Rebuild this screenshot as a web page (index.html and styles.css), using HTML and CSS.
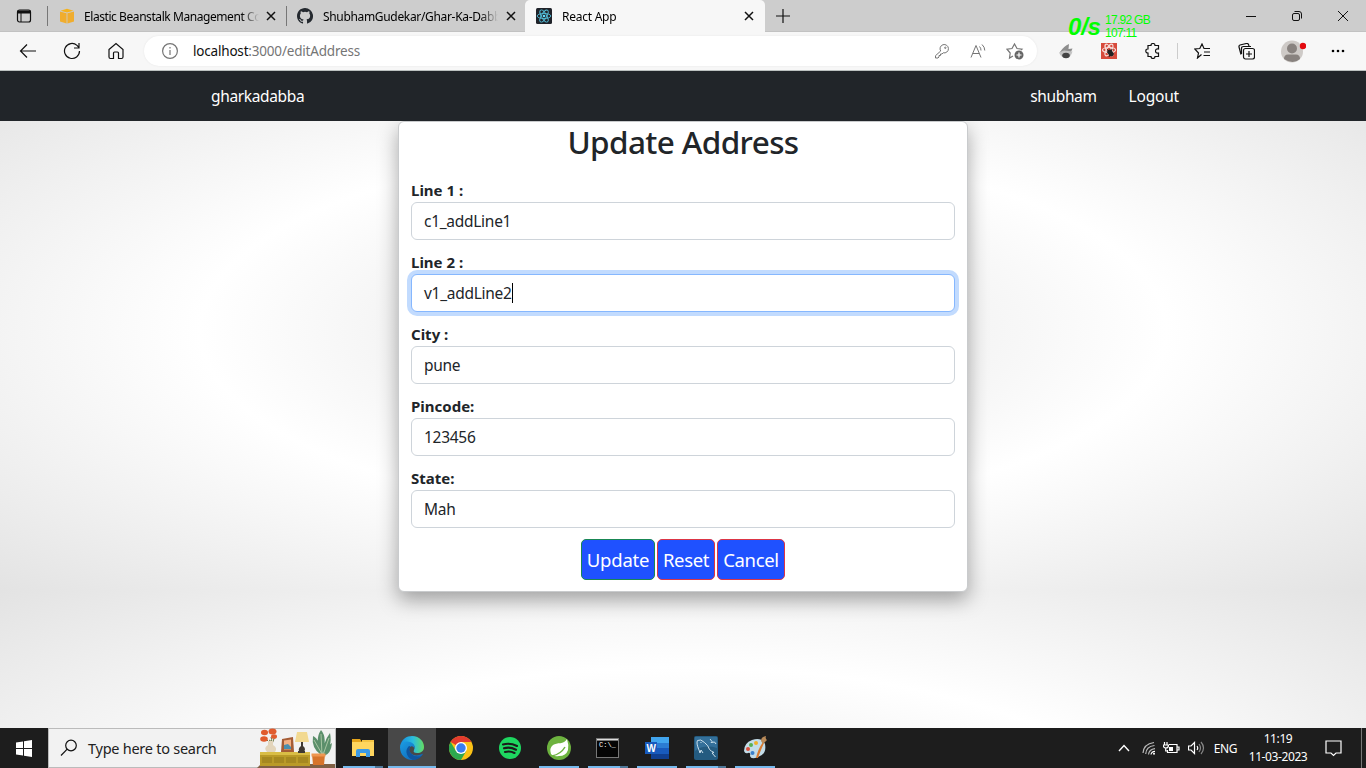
FILE: index.html
```html
<!DOCTYPE html>
<html lang="en">
<head>
<meta charset="utf-8">
<title>React App</title>
<link rel="stylesheet" href="styles.css">
</head>
<body>
<div class="screen">
  <header class="tabs">
    <div class="tab-menu"><svg class="i" width="16" height="16" viewBox="0 0 16 16"><rect x="1.5" y="2" width="13" height="12" rx="2"/><path d="M2 3.5h12M5 5v9" stroke-width="1"/><path d="M2 3h12v2H2z" fill="#111"/></svg></div>
    <div class="tab tab-first">
      <svg width="16" height="16" viewBox="0 0 16 16"><path fill="#f0ad2e" d="M1 3.500l6.600 1.800V15.500L1 13.500zM15 3.500L8.400 5.300v10.200l6.600-2z"/><path fill="#f5b21c" d="M1.500 2.700L8 .7l6.500 2L8 4.600z"/></svg>
      <span class="tab-title">Elastic Beanstalk Management Co</span>
      <svg class="i close" width="10" height="10" viewBox="0 0 10 10"><path d="M1 1l8 8M9 1L1 9"/></svg>
    </div>
    <div class="tab tab-second">
      <svg width="16" height="16" viewBox="0 0 16 16"><path fill="#24292f" d="M8 0C3.580 0 0 3.580 0 8c0 3.540 2.290 6.530 5.470 7.590.4.070.55-.17.55-.38v-1.490c-2.010.37-2.530-.49-2.690-.94-.09-.23-.48-.94-.82-1.130-.28-.15-.68-.52-.01-.53.63-.01 1.080.58 1.230.82.72 1.210 1.870.87 2.330.66.070-.52.28-.87.51-1.070-1.780-.2-3.640-.89-3.640-3.950 0-.87.31-1.590.82-2.150-.08-.2-.36-1.020.08-2.120 0 0 .67-.21 2.200.82a7.600 7.600 0 0 1 4 0c1.530-1.040 2.200-.82 2.200-.82.44 1.100.16 1.920.08 2.120.51.56.82 1.270.82 2.150 0 3.070-1.870 3.750-3.650 3.950.29.25.54.73.54 1.480v2.200c0 .21.15.46.55.38A8 8 0 0 0 8 0z"/></svg>
      <span class="tab-title">ShubhamGudekar/Ghar-Ka-Dabb</span>
      <svg class="i close" width="10" height="10" viewBox="0 0 10 10"><path d="M1 1l8 8M9 1L1 9"/></svg>
    </div>
    <div class="tab tab-active">
      <svg width="16" height="16" viewBox="0 0 16 16"><rect width="16" height="16" rx="1.500" fill="#20232a"/><g fill="none" stroke="#53bdd8" stroke-width=".9"><ellipse cx="8" cy="8" rx="6.800" ry="2.600"/><ellipse cx="8" cy="8" rx="6.800" ry="2.600" transform="rotate(60 8 8)"/><ellipse cx="8" cy="8" rx="6.800" ry="2.600" transform="rotate(120 8 8)"/></g><circle cx="8" cy="8" r="1.300" fill="#61dafb"/></svg>
      <span class="tab-title">React App</span>
      <svg class="i close" width="10" height="10" viewBox="0 0 10 10"><path d="M1 1l8 8M9 1L1 9"/></svg>
    </div>
    <svg class="i new-tab" width="14" height="14" viewBox="0 0 14 14"><path d="M7 0v14M0 7h14"/></svg>
    <div class="window-controls">
      <svg class="i" width="10" height="10" viewBox="0 0 10 10"><path d="M0 5.500h10"/></svg>
      <svg class="i" width="10" height="10" viewBox="0 0 10 10"><rect x=".5" y="2.500" width="7" height="7" rx="1.500"/><path d="M2.500.5H7A2.500 2.500 0 0 1 9.500 3v4.500"/></svg>
      <svg class="i" width="10" height="10" viewBox="0 0 10 10"><path d="M0 0l10 10M10 0L0 10"/></svg>
    </div>
  </header>
  <div class="toolbar">
    <div class="nav-icons">
      <svg class="i" width="18" height="18" viewBox="0 0 18 18"><path d="M17 9H2M8 2.500L1.500 9 8 15.500"/></svg>
      <svg class="i" width="18" height="18" viewBox="0 0 18 18"><path d="M16.500 9A7.500 7.500 0 1 1 14 3.400L16 5.500M16 1v5h-5"/></svg>
      <svg class="i" width="18" height="18" viewBox="0 0 18 18"><path d="M2 7.500L9 1.500l7 6V15q0 1.500-1.500 1.500h-3V11q0-1-1-1h-3q-1 0-1 1v5.500h-3Q2 16.500 2 15z"/></svg>
    </div>
    <div class="address">
      <svg class="i gray" width="16" height="16" viewBox="0 0 16 16"><circle cx="8" cy="8" r="7.400"/><path d="M8 7v5M8 4v1.500"/></svg>
      <span class="url"><b>localhost</b>:3000/editAddress</span>
      <div class="address-tools">
        <svg class="i gray thin" width="16" height="16" viewBox="0 0 16 16"><path d="M6.700 8A4.200 4.200 0 1 1 9.200 9.800L8 11H6.500v1.500H5V14l-1 1H1.500v-2.300z"/><circle cx="11.300" cy="4.800" r=".7"/></svg>
        <svg class="i gray thin" width="16" height="16" viewBox="0 0 16 16"><path d="M1 14.500L6 2.500l5 12M2.800 10.500h6.500M9.500 3.500q1.500 1.500 1.500 4M12 1.500q2.800 2.500 2.800 6"/></svg>
        <svg class="i gray" width="18" height="18" viewBox="0 0 18 18"><path d="M7 14l-3.500 2 .7-5L1 7.200l5-.7L8.500 2 11 6.500l5 .7-1 1"/><circle cx="13" cy="13" r="4.500" fill="#666" stroke="none"/><path d="M13 10.500v5M10.500 13h5" stroke="#fff"/></svg>
      </div>
    </div>
    <div class="extensions">
      <svg class="ext-a" width="16" height="16" viewBox="0 0 16 16"><path d="M2 9Q6 3 11 1l-.5 5 4-.5q-2 6-6.500 8-5 0-6-4.500z" fill="#8e8e8e"/><path d="M1 9.500l5-2 8.500 1q-1.500 6-6.500 6.500-5-.5-7-5.500z" fill="#c4c4c4"/><ellipse cx="8" cy="12.500" rx="3.800" ry="2.800" fill="#444"/></svg>
      <svg class="ext-b" width="16" height="16" viewBox="0 0 16 16"><path fill="#d74a3b" d="M0 0h16v16H0z"/><g fill="none" stroke="#f6dcd9" stroke-width="1.200"><ellipse cx="8" cy="7" rx="6.500" ry="2.500"/><ellipse cx="8" cy="7" rx="6.500" ry="2.500" transform="rotate(60 8 7)"/><ellipse cx="8" cy="7" rx="6.500" ry="2.500" transform="rotate(120 8 7)"/></g><ellipse cx="9.500" cy="10" rx="2.400" ry="3.800" fill="#222" transform="rotate(-35 9.500 10)"/><path d="M6 9l7 2M8 14l3-8M6 6.500l3 2" stroke="#222"/></svg>
      <svg class="i ext-c" width="16" height="16" viewBox="0 0 16 16"><path d="M3 2.500h3q0-2 2-2t2 2h3.500V6Q10.500 5.500 10.500 8t3 2v3.500H10q0 2-2 2t-2-2H3V10Q.8 10 .8 8T3 6z"/></svg>
      <span class="divider"></span>
      <svg class="i favorites" width="17" height="16" viewBox="0 0 17 16"><path d="M7.500 11.500L3.500 15l1-5L.8 6l5-.5L8 1l2 4.500h6M10 9h6M9.500 12.500H16"/></svg>
      <svg class="i collections" width="17" height="17" viewBox="0 0 17 17"><rect x="5.500" y="5.500" width="11" height="10.500" rx="2"/><path d="M11 8v6M8 11h6M3 11.500L1 4Q.7 2.500 2 2l6.500-1.500Q10 .2 10.500 1.500L11 3M3.500 11V5.500q0-2 2-2H13"/></svg>
      <svg class="profile" width="25" height="24" viewBox="0 0 25 24"><circle cx="11" cy="12.500" r="11" fill="#cecac7"/><circle cx="11" cy="9.500" r="5" fill="#88827f"/><path d="M3 20Q3 15.500 7 15.500h8q4 0 4 4.500-7 6-16 0z" fill="#88827f"/><circle cx="22" cy="7" r="3.200" fill="#e30b10"/></svg>
      <svg width="14" height="4" viewBox="0 0 14 4"><circle cx="2" cy="2" r="1.300"/><circle cx="7" cy="2" r="1.300"/><circle cx="12" cy="2" r="1.300"/></svg>
    </div>
  </div>
  <div class="speed"><strong>0/s</strong><span>17.92 GB<br>107:11</span></div>

  <main class="page">
    <nav class="navbar"><a class="brand">gharkadabba</a><a>shubham</a><a class="logout">Logout</a></nav>
    <form class="card">
      <h1>Update Address</h1>
      <label>Line 1 :</label><div class="input">c1_addLine1</div>
      <label>Line 2 :</label><div class="input focused">v1_addLine2<i class="caret"></i></div>
      <label>City :</label><div class="input">pune</div>
      <label>Pincode:</label><div class="input">123456</div>
      <label>State:</label><div class="input">Mah</div>
      <div class="buttons"><button type="button" class="update">Update</button><button type="button">Reset</button><button type="button">Cancel</button></div>
    </form>
  </main>

  <footer class="taskbar">
    <div class="start"><svg width="16" height="17" viewBox="0 0 16 17"><path fill="#fff" d="M0 2.500l7-1V8H0zM8 1.300L16 0v8H8zM0 9h7v6.500l-7-1zM8 9h8v8l-8-1.300z"/></svg></div>
    <div class="search">
      <svg class="i" width="18" height="18" viewBox="0 0 18 18"><circle cx="11" cy="6.500" r="5.300"/><path d="M7.200 10.200L1 16.500"/></svg>
      <span>Type here to search</span>
      <svg class="scene" width="78" height="40" viewBox="0 0 78 40">
        <path d="M0 40L4 36h74v4z" fill="#806044"/>
        <path d="M3 25h50v13H3z" fill="#b99a27"/><path d="M3 24h50v3H3z" fill="#d9bd45"/><path d="M5 29h10v6H5zM17 29h10v6H17zM29 29h10v6H29zM41 29h10v6H41z" fill="#a58820"/>
        <path d="M12 12q4 3 2-3M18 8l-3 8M8 10l6 6" stroke="#66713b" fill="none"/><path d="M11 13h5v4q5 3 2 7h-8q-4-4 1-7z" fill="#e3d5bc"/>
        <g fill="#e05b2e"><ellipse cx="7.500" cy="4.500" rx="3.500" ry="2.800"/><ellipse cx="15.500" cy="3.500" rx="4" ry="3"/><ellipse cx="7" cy="11" rx="3.800" ry="2.800"/><ellipse cx="17" cy="8.500" rx="3" ry="2.300"/></g>
        <path d="M25 11l11-2 1 15H24z" fill="#a55c35"/><path d="M27 12.500l7-1v10h-7z" fill="#f3b083"/><path d="M27 17l4-1 3 3v2h-7z" fill="#498fb0"/>
        <path d="M40 4h10l2 10H38z" fill="#f2d991"/><path d="M44 14h2v4q4 3 0 7h-3q-3-4 1-7z" fill="#3e3832"/><path d="M41 23h7v2h-7z" fill="#3e3832"/>
        <g fill="#5b8f6b"><path d="M64 27Q54 20 56 8q7 3 8 19zM65 27Q57 12 64 2q7 8 1 25zM66 27Q66 14 73 5q3 14-7 22zM67 28q2-10 8-13-1 11-8 13z"/></g><path d="M64 6l1 21M57 12l8 14M72 10l-6 17" stroke="#a8c6a3" fill="none"/>
        <path d="M55 26h13l-1 11H56z" fill="#d7742b"/><path d="M54.500 25.500h14v3h-14z" fill="#ef9650"/>
      </svg>
    </div>
    <div class="apps">
      <div class="app multi"><svg width="24" height="22" viewBox="0 0 24 22"><path d="M1 2h8l2 3v2H1z" fill="#e6a51b"/><path d="M11 3h12v4H11z" fill="#f4c443"/><path d="M1 5h22v14H1z" fill="#ffd65f"/><path d="M5 20v-6q0-2 2-2h10q2 0 2 2v6h-4v-4H9v4z" fill="#3c9ae6"/></svg></div>
      <div class="app selected"><svg width="24" height="24" viewBox="0 0 24 24"><defs><linearGradient id="edge"><stop stop-color="#168de0"/><stop offset=".55" stop-color="#2bbddd"/><stop offset="1" stop-color="#64dc61"/></linearGradient><linearGradient id="edge-low" x1="0" y1="0" x2="1" y2="1"><stop stop-color="#1b9de2"/><stop offset="1" stop-color="#0d5eb4"/></linearGradient></defs><path d="M0 11C1 3 7 0 12 0c8 0 12 6 12 11 0 4-3 6-7 6-3 0-4-1-3-3 2-4-1-7-6-7-4 0-7 2-8 4z" fill="url(#edge)"/><path d="M0 11C1 6 6 4.500 10 6c4 1 5.500 4.500 4.500 7-.5-2-2-3-3.500-2.500-2 .8-3 4 0 7 3 2.500 7 2.500 11 .5.800-.4 1 .2.500.8C20 22 16 24 12 24 5 24 0 18.500 0 11z" fill="url(#edge-low)"/><path d="M9 10q-4 4-2 8.500Q8.500 22.500 13 24q5-.2 8.500-4Q15 22 11 17.500q-3-3.500-.5-7z" fill="#0f559f"/></svg></div>
      <div class="app idle"><svg width="24" height="24" viewBox="0 0 24 24"><circle cx="12" cy="12" r="12" fill="#fbc116"/><path d="M12 12L1.600 6A12 12 0 0 1 22.400 6H12z" fill="#e33b2e"/><path d="M1.600 6A12 12 0 0 0 12 24l5.200-9H7z" fill="#2da94f"/><circle cx="12" cy="12" r="6" fill="#fff"/><circle cx="12" cy="12" r="4.700" fill="#3a7df0"/></svg></div>
      <div class="app idle"><svg width="22" height="22" viewBox="0 0 22 22"><circle cx="11" cy="11" r="11" fill="#1ed760"/><path d="M4 7.500q7-2 14 1.500M5 11.300q6-1.800 12 1.400M6 15q5-1.500 9.500 1" fill="none" stroke="#1b1b1b" stroke-width="2.100" stroke-linecap="round"/></svg></div>
      <div class="app"><svg width="24" height="24" viewBox="0 0 24 24"><circle cx="12" cy="12" r="12" fill="#6db33f"/><path d="M20 3q2 6 1 11-2 6-9 6-6 1-8-2Q2 12 6 9c4-3 11 0 14-6z" fill="#fff"/><path d="M5 20Q14 18 18 11" stroke="#6db33f" stroke-width="1.500" fill="none"/></svg></div>
      <div class="app multi"><svg width="23" height="20" viewBox="0 0 23 20"><path d="M0 0h23v20H0z" fill="#777"/><path d="M1 3h21v16H1z" fill="#050505"/><path d="M1 1h21v1H1z" fill="#ddd"/><text x="3" y="9" class="prompt">C:\_</text></svg></div>
      <div class="app"><svg width="24" height="22" viewBox="0 0 24 22"><path d="M6 0h18v6H6z" fill="#41a5ee"/><path d="M6 6h18v5H6z" fill="#2b7cd3"/><path d="M6 11h18v6H6z" fill="#185abd"/><path d="M6 17h18v5H6z" fill="#103f91"/><path d="M0 5h12v12H0z" fill="#185abd"/><text x="1.500" y="14.500" class="word">W</text></svg></div>
      <div class="app multi"><svg width="24" height="24" viewBox="0 0 24 24"><rect width="24" height="24" rx="2" fill="#245b80"/><path d="M1 1h22v11Q10 8 1 15z" fill="#34709a"/><path d="M6 17L5 14Q2 7 3.500 4.500q3-2 7 2 4 3 5 7 2 2 4.500 3l-2 .5 3.500 4M6 17l1-3 2 3M6.500 6l1 1M16 3l2 2.500-1 1 3.500-.5L22 8" fill="none" stroke="#cce0ec"/></svg></div>
      <div class="app"><svg width="24" height="24" viewBox="0 0 24 24"><path d="M1 15Q1 7 9 4q10-3 13 4 2 10-7 13-7 3-8-1 1-4-2-3-3 1-4-2z" fill="#c3dce8"/><circle cx="8" cy="9" r="2" fill="#58b052"/><circle cx="13" cy="7" r="2" fill="#efaf2a"/><circle cx="5" cy="13" r="2" fill="#da503d"/><circle cx="9.500" cy="17" r="2" fill="#3b80ca"/><path d="M13 22Q15 13 20 6l1 1q-4 9-6 15z" fill="#d87b31"/><path d="M18 5q0-4 5-5-1 3 1 4-3 3-4 4z" fill="#b98a59"/></svg></div>
    </div>
    <div class="tray">
      <svg class="i" width="12" height="8" viewBox="0 0 12 8"><path d="M1 7l5-5.500L11 7" stroke-width="1.400"/></svg>
      <svg class="i wifi" width="14" height="14" viewBox="0 0 14 14"><path d="M1 12Q1.500 3 12 1.500M3.700 13Q4 5.500 12.500 4.500M6.500 13.500Q7 8.500 13 7.700" stroke="#bbb"/><path d="M9 13.500q.5-3 4-3.200"/><circle cx="12" cy="12.800" r="1" fill="#fff" stroke="none"/></svg>
      <svg class="i battery" width="17" height="12" viewBox="0 0 17 12"><path d="M6 2.500h8v8H4.500V8M14 5h2v3h-2M1.500 0v3M4 0v3M0 3h5.500q0 3-2.500 3T0 3M2.700 6v3H5"/><path d="M6 5h4v4H6z" fill="#fff" stroke="none"/></svg>
      <svg class="i sound" width="17" height="14" viewBox="0 0 17 14"><path d="M.5 5h2.500l3.500-3.500v11L3 9H.5zM9 5q1.500 2 0 4"/><path d="M11 3q3 4 0 8M13 1q5 6 0 12" stroke="#888"/></svg>
      <span class="lang">ENG</span>
      <div class="clock">11:19<br>11-03-2023</div>
      <svg class="i note" width="17" height="17" viewBox="0 0 17 17"><path d="M1 1h15v12h-5l-2.500 2.500L6 13H1z"/></svg>
    </div>
  </footer>
</div>
</body>
</html>
```
FILE: styles.css
```css
* { box-sizing: border-box; }
body { margin: 0; font-family: "Noto Sans", "Open Sans", sans-serif; }
svg { display: block; flex: none; }
.i { fill: none; stroke: #111; stroke-width: 1.2; }
.gray { stroke: #757575; }
.thin { stroke-width: 1; }
.screen { width: 1366px; height: 768px; overflow: hidden; display: flex; flex-direction: column; position: relative; }
.tabs { height: 32px; flex: none; background: #cdcdcd; display: flex; align-items: center; font-size: 12px; box-shadow: inset 0 -1px #c2c2c2; }
.tab-menu { width: 48px; height: 20px; padding: 2px 0 0 16px; border-right: 1px solid #777; }
.tab { display: flex; align-items: center; gap: 9px; height: 32px; padding-left: 11px; }
.tab-first { width: 239px; }
.tab-second { width: 238px; position: relative; padding-left: 10px; }
.tab-second::before { content: ""; position: absolute; left: -1px; top: 6px; width: 1px; height: 20px; background: #777; }
.tab-title { width: 175px; white-space: nowrap; letter-spacing: -.33px; -webkit-mask-image: linear-gradient(90deg, #000 90%, transparent); mask-image: linear-gradient(90deg, #000 90%, transparent); }
.tab-first .tab-title { letter-spacing: -.43px; }
.tab-second .tab-title { margin-left: 1px; }
.close { margin-left: -2px; stroke-width: 1.5; }
.tab-second .close { margin-left: -1px; }
.tab-active { width: 240px; background: #f7f7f7; border-radius: 5px 5px 0 0; }
.tab-active .tab-title { width: 175px; margin-left: 1px; letter-spacing: -.25px; }
.new-tab { margin-left: 11px; }
.window-controls { margin-left: auto; padding-right: 18px; display: flex; gap: 36px; }
.window-controls .i { stroke-width: 1; }
.toolbar { height: 39px; flex: none; display: flex; align-items: center; background: #f7f7f7; border-bottom: 1px solid #bcc1c0; }
.nav-icons { display: flex; width: 144px; padding-left: 19px; gap: 26px; }
.address { width: 893px; height: 30px; border-radius: 15px; background: #fff; display: flex; align-items: center; padding: 0 13px 0 18px; box-shadow: 0 0 2px #e4e4e4; }
.url { font-size: 13.5px; letter-spacing: -.19px; color: #757575; margin-left: 15px; }
.url b { color: #111; font-weight: 400; }
.address-tools { display: flex; align-items: center; gap: 20px; margin-left: auto; }
.extensions { flex: 1; display: flex; align-items: center; padding-left: 21px; }
.ext-a { margin-right: 27px; }
.ext-b { margin-right: 28px; }
.ext-c, .divider { margin-right: 16px; }
.divider { width: 1px; height: 16px; background: #ccc; }
.favorites { margin-right: 27px; }
.collections { margin-right: 26px; }
.profile { margin-right: 25px; }
.speed { position: absolute; left: 1068px; top: 14px; display: flex; align-items: flex-start; color: #0f0; font-family: "Liberation Sans", sans-serif; white-space: nowrap; }
.speed strong { width: 37px; font-size: 24px; line-height: 26px; font-style: italic; letter-spacing: -.2px; }
.speed span { font-size: 12px; line-height: 13px; letter-spacing: -.72px; }
.page { height: 657px; flex: none; background: radial-gradient(#e5e5e5, #fff, #e3e3e3) 0 0 / 100% 520px; font-size: 16px; color: #212529; }
.navbar { height: 50px; background: #212529; color: #fff; display: flex; align-items: center; padding: 0 187px 1px 211px; font-size: 15.5px; letter-spacing: -.35px; }
.brand { margin-right: auto; }
.logout { margin-left: 32px; letter-spacing: -.2px; }
.card { width: 570px; height: 471px; margin: 0 auto; padding: 0 12px; border: 1px solid #c9cbcd; border-radius: 6px; background: #fff; box-shadow: 0 8px 20px rgba(0,0,0,.34); clip-path: inset(0 -40px -40px); }
h1 { font-size: 31.5px; font-weight: 500; line-height: 38px; letter-spacing: -.62px; margin: 1px 0 17px; text-align: center; }
label { display: block; height: 24px; line-height: 24px; font-size: 15px; font-weight: 700; }
label + .input { margin-top: 0; }
.input { height: 38px; border: 1px solid #ced4da; border-radius: 6px; padding: 0 12px; line-height: 37px; font-size: 15.5px; letter-spacing: -.28px; margin-bottom: 10px; display: flex; align-items: center; background: #fff; }
.focused { border-color: #86b7fe; box-shadow: 0 0 0 4px #c2dbfe; }
.caret { width: 1px; height: 20px; background: #000; }
.buttons { display: flex; justify-content: center; gap: 2px; margin-top: 11px; }
button { height: 41px; width: 58px; padding: 0; border: 1px solid #dc3545; border-radius: 5px; background: #1f51ff; color: #fff; font: 18.5px "Noto Sans", sans-serif; letter-spacing: -.35px; }
button.update { width: 74px; border-color: #198754; letter-spacing: -.2px; }
button:last-child { width: 68px; }
.taskbar { height: 40px; flex: none; background: #1d1d1d; display: flex; color: #fff; }
.start { width: 48px; padding: 12px 0 0 16px; }
.search { width: 288px; height: 40px; background: #f2f2f2; border: 1px solid #bbb; color: #222; display: flex; align-items: center; padding-left: 11px; font-size: 14.5px; letter-spacing: -.26px; }
.search span { margin-left: 10px; white-space: nowrap; }
.scene { margin-left: auto; }
.apps { display: flex; padding-left: 2px; }
.app { width: 49px; height: 40px; display: flex; align-items: center; justify-content: center; background: linear-gradient(#76b9ed,#76b9ed) 5px 38px / 40px 2px no-repeat; }
.multi { background: linear-gradient(90deg,#76b9ed 32px,#4f7899 32px) 5px 38px / 40px 2px no-repeat; }
.selected { background: linear-gradient(#484848 38px,#76b9ed 38px) 1px 0 / 48px 40px no-repeat; }
.idle { background: none; }
.prompt { font: 7px "Liberation Mono", monospace; fill: #fff; }
.word { font: bold 10px "Liberation Sans", sans-serif; fill: #fff; }
.tray { margin-left: auto; display: flex; align-items: center; padding-right: 24px; position: relative; }
.tray::after { content: ""; position: absolute; right: 4px; top: 0; width: 1px; height: 40px; background: #777; }
.tray .i { stroke: #fff; margin-right: 12px; }
.tray .wifi { margin-right: 7px; }
.tray .battery { margin-right: 8px; }
.tray .sound { margin-right: 9px; }
.lang { font-size: 12px; letter-spacing: -.4px; }
.clock { width: 82px; margin-right: 6px; font-size: 12px; line-height: 18px; letter-spacing: -.4px; text-align: center; }
.tray .note { margin: 0; }
```
